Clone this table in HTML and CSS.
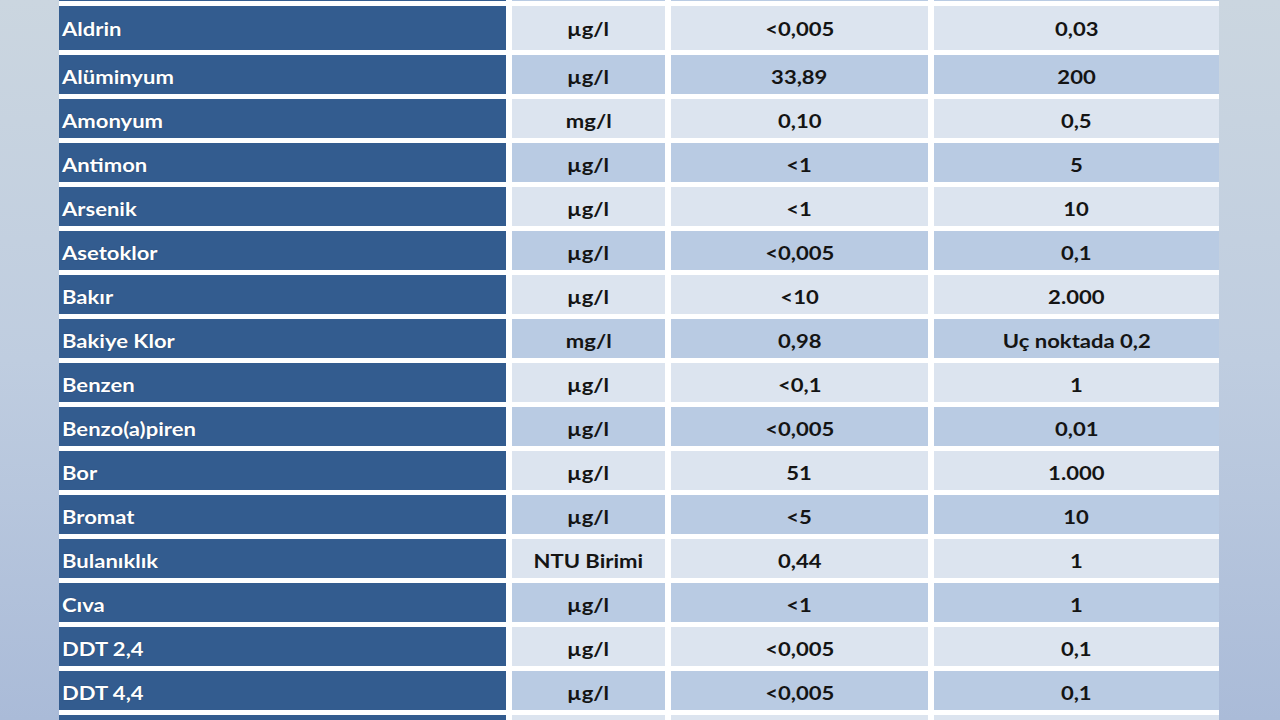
FILE: index.html
```html
<!DOCTYPE html>
<html lang="tr">
<head>
<meta charset="utf-8">
<title>Su Analiz Tablosu</title>
<link rel="stylesheet" href="styles.css">
</head>
<body>
<div class="page">
  <div class="table">
    <div class="row alt edge"><div class="name"></div><div class="cell"></div><div class="cell"></div><div class="cell"></div></div>
    <div class="row tall"><div class="name"><span>Aldrin</span></div><div class="cell"><span>µg/l</span></div><div class="cell"><span>&lt;0,005</span></div><div class="cell"><span>0,03</span></div></div>
    <div class="row alt"><div class="name"><span>Alüminyum</span></div><div class="cell"><span>µg/l</span></div><div class="cell"><span>33,89</span></div><div class="cell"><span>200</span></div></div>
    <div class="row"><div class="name"><span>Amonyum</span></div><div class="cell"><span>mg/l</span></div><div class="cell"><span>0,10</span></div><div class="cell"><span>0,5</span></div></div>
    <div class="row alt"><div class="name"><span>Antimon</span></div><div class="cell"><span>µg/l</span></div><div class="cell"><span>&lt;1</span></div><div class="cell"><span>5</span></div></div>
    <div class="row"><div class="name"><span>Arsenik</span></div><div class="cell"><span>µg/l</span></div><div class="cell"><span>&lt;1</span></div><div class="cell"><span>10</span></div></div>
    <div class="row alt"><div class="name"><span>Asetoklor</span></div><div class="cell"><span>µg/l</span></div><div class="cell"><span>&lt;0,005</span></div><div class="cell"><span>0,1</span></div></div>
    <div class="row"><div class="name"><span>Bakır</span></div><div class="cell"><span>µg/l</span></div><div class="cell"><span>&lt;10</span></div><div class="cell"><span>2.000</span></div></div>
    <div class="row alt"><div class="name"><span>Bakiye Klor</span></div><div class="cell"><span>mg/l</span></div><div class="cell"><span>0,98</span></div><div class="cell"><span>Uç noktada 0,2</span></div></div>
    <div class="row"><div class="name"><span>Benzen</span></div><div class="cell"><span>µg/l</span></div><div class="cell"><span>&lt;0,1</span></div><div class="cell"><span>1</span></div></div>
    <div class="row alt"><div class="name"><span>Benzo(a)piren</span></div><div class="cell"><span>µg/l</span></div><div class="cell"><span>&lt;0,005</span></div><div class="cell"><span>0,01</span></div></div>
    <div class="row"><div class="name"><span>Bor</span></div><div class="cell"><span>µg/l</span></div><div class="cell"><span>51</span></div><div class="cell"><span>1.000</span></div></div>
    <div class="row alt"><div class="name"><span>Bromat</span></div><div class="cell"><span>µg/l</span></div><div class="cell"><span>&lt;5</span></div><div class="cell"><span>10</span></div></div>
    <div class="row"><div class="name"><span>Bulanıklık</span></div><div class="cell"><span>NTU Birimi</span></div><div class="cell"><span>0,44</span></div><div class="cell"><span>1</span></div></div>
    <div class="row alt"><div class="name"><span>Cıva</span></div><div class="cell"><span>µg/l</span></div><div class="cell"><span>&lt;1</span></div><div class="cell"><span>1</span></div></div>
    <div class="row"><div class="name"><span>DDT 2,4</span></div><div class="cell"><span>µg/l</span></div><div class="cell"><span>&lt;0,005</span></div><div class="cell"><span>0,1</span></div></div>
    <div class="row alt"><div class="name"><span>DDT 4,4</span></div><div class="cell"><span>µg/l</span></div><div class="cell"><span>&lt;0,005</span></div><div class="cell"><span>0,1</span></div></div>
    <div class="row edge"><div class="name"></div><div class="cell"></div><div class="cell"></div><div class="cell"></div></div>
  </div>
</div>
</body>
</html>
```

FILE: styles.css
```css
html, body {
  margin: 0;
  padding: 0;
  width: 1280px;
  height: 720px;
  overflow: hidden;
}

.page {
  width: 1280px;
  height: 720px;
  overflow: hidden;
  background: linear-gradient(180deg, #cbd6e0 0%, #bfcde0 50%, #aabbd8 100%);
  font-family: Lato, "Open Sans", "Liberation Sans", sans-serif;
  font-weight: 700;
  font-size: 19px;
  color: #141414;
}

.table {
  display: grid;
  grid-template-columns: 447px 153px 257px 285px;
  grid-auto-rows: minmax(39px, auto);
  column-gap: 6px;
  row-gap: 5px;
  margin-left: 59px;
  margin-top: -38px;
  background: #ffffff;
  width: max-content;
  padding-bottom: 5px;
}

.row {
  display: contents;
}

.row > div {
  display: flex;
  align-items: center;
  justify-content: center;
  padding-top: 3px;
  box-sizing: border-box;
  background: #dce4ef;
  white-space: nowrap;
}

.row.tall > div {
  height: 44px;
  padding-top: 1px;
}

.row.alt > div {
  background: #b9cbe3;
}

.row > div > span {
  display: inline-block;
  transform: scaleX(1.16);
  transform-origin: center center;
}

.row > .name {
  justify-content: flex-start;
  padding-left: 3px;
  background: #335c8f;
  color: #ffffff;
  text-shadow: 0 0 1px rgba(20, 40, 70, 0.7);
}

.row > .name > span {
  transform-origin: left center;
}

.row.alt > .name {
  background: #335c8f;
}
```
